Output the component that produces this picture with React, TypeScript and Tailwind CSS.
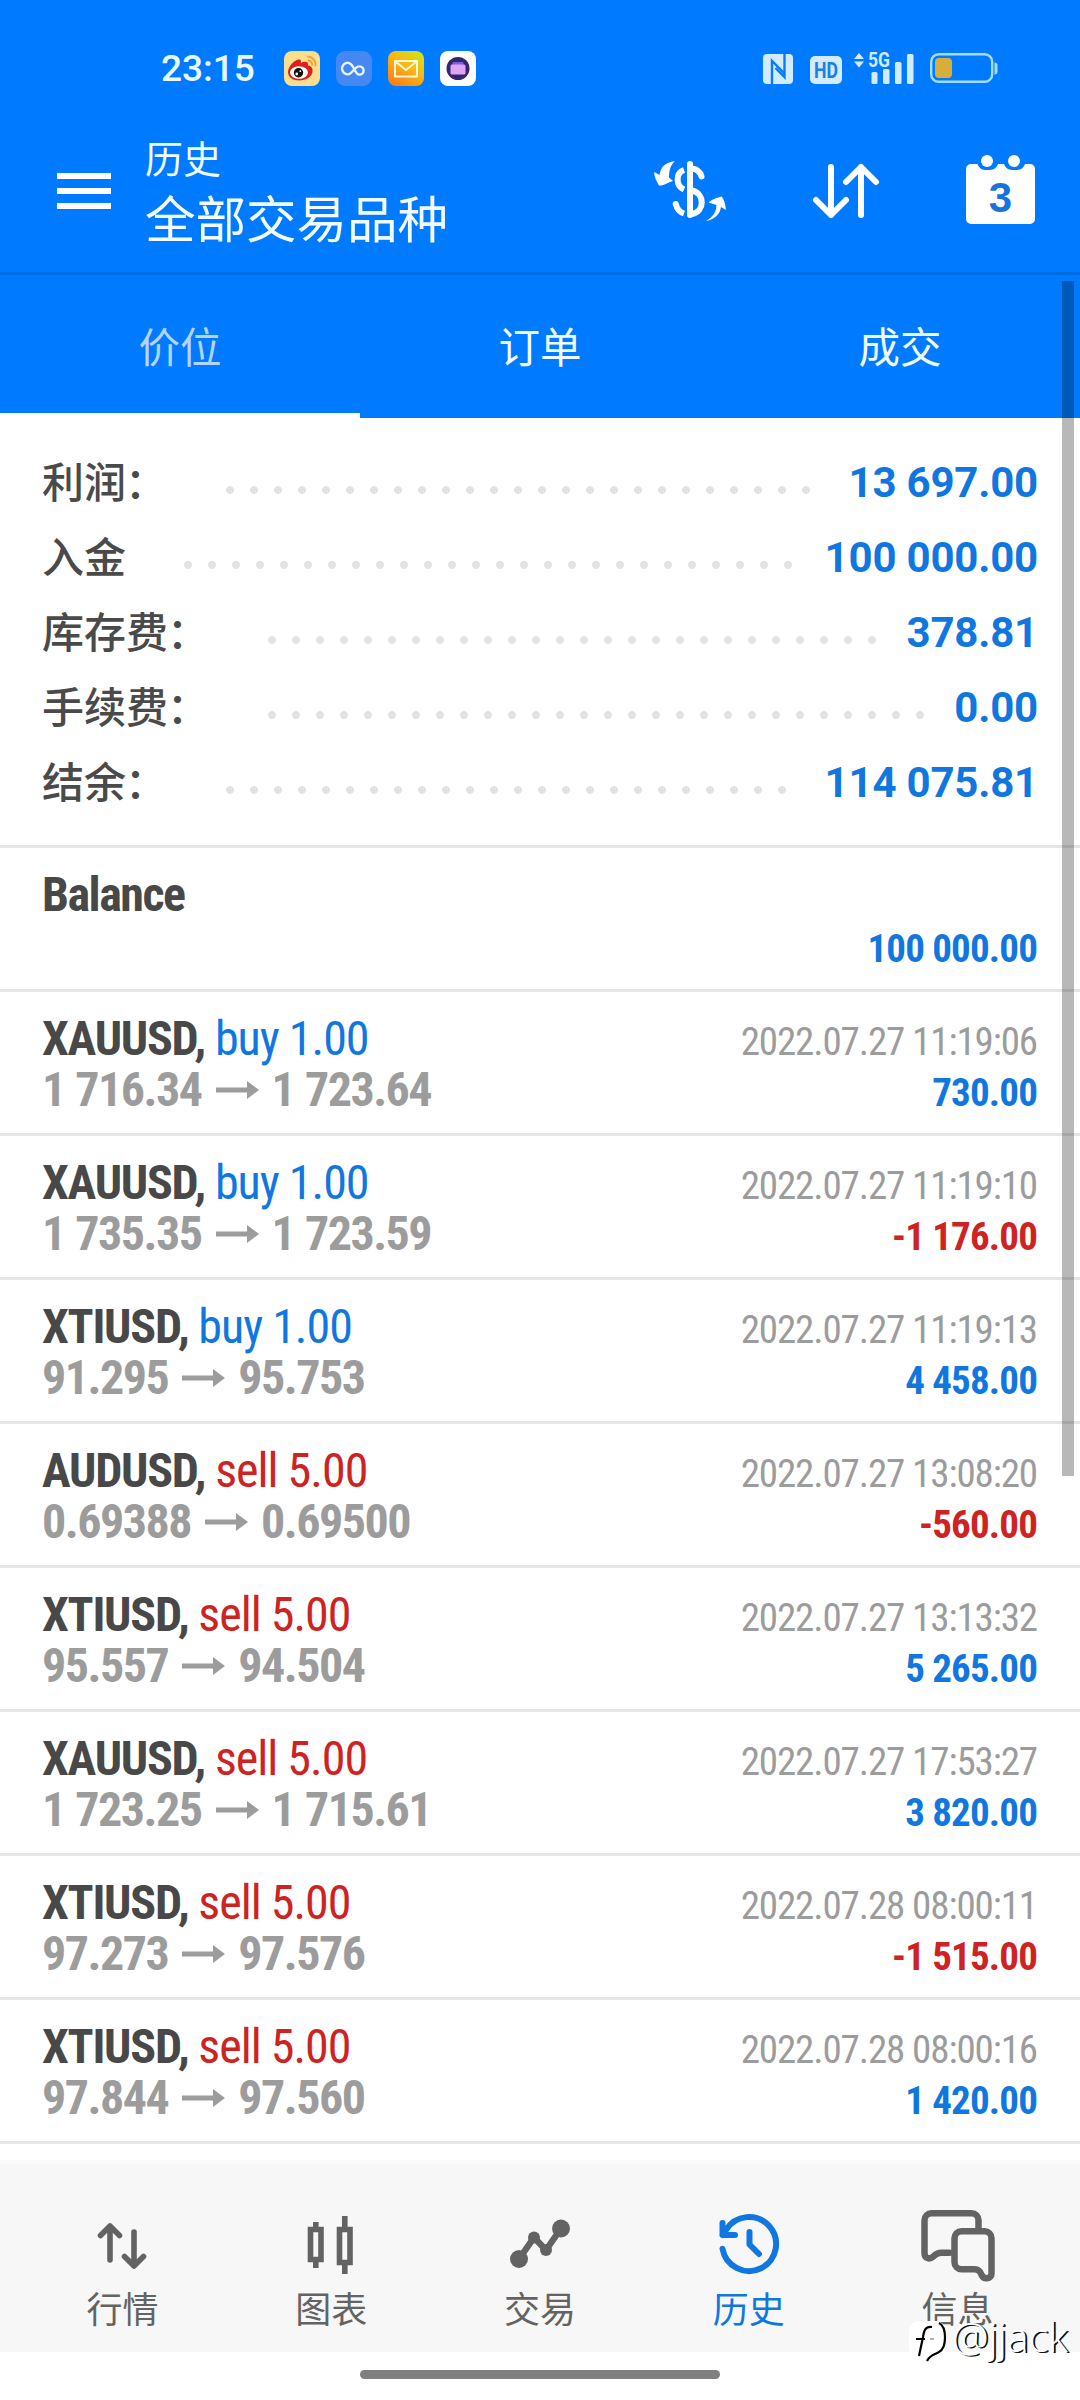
import React from "react";

const CN = "font-['Noto_Sans_CJK_SC',sans-serif]";

const summary = [
  { label: "利润", colon: true, dots: 25, value: "13 697.00" },
  { label: "入金", colon: false, dots: 26, value: "100 000.00" },
  { label: "库存费", colon: true, dots: 26, value: "378.81" },
  { label: "手续费", colon: true, dots: 28, value: "0.00" },
  { label: "结余", colon: true, dots: 24, value: "114 075.81" },
];

const deals = [
  ["XAUUSD", "buy 1.00", "1 716.34", "1 723.64", "2022.07.27 11:19:06", "730.00"],
  ["XAUUSD", "buy 1.00", "1 735.35", "1 723.59", "2022.07.27 11:19:10", "-1 176.00"],
  ["XTIUSD", "buy 1.00", "91.295", "95.753", "2022.07.27 11:19:13", "4 458.00"],
  ["AUDUSD", "sell 5.00", "0.69388", "0.69500", "2022.07.27 13:08:20", "-560.00"],
  ["XTIUSD", "sell 5.00", "95.557", "94.504", "2022.07.27 13:13:32", "5 265.00"],
  ["XAUUSD", "sell 5.00", "1 723.25", "1 715.61", "2022.07.27 17:53:27", "3 820.00"],
  ["XTIUSD", "sell 5.00", "97.273", "97.576", "2022.07.28 08:00:11", "-1 515.00"],
  ["XTIUSD", "sell 5.00", "97.844", "97.560", "2022.07.28 08:00:16", "1 420.00"],
];

function StatusBar() {
  return (
    <div className="flex h-[138px] pt-[51px] pl-[161px]">
      <div className="flex h-9 w-[123px] items-center font-['Roboto'] text-[37px] leading-9 font-medium text-[#e9f7ff]">23:15</div>
      <div className="flex gap-4">
        <svg width="36" height="36" viewBox="0 0 36 36">
          <rect width="36" height="35" rx="8" fill="#fbdf8c" />
          <path d="M24 5.500a8 8 0 0 1 7.500 9M24.500 9.500a4 4 0 0 1 3.600 4.400" fill="none" stroke="#f0a030" strokeWidth="1.800" strokeLinecap="round" />
          <path d="M4 21c0-5 6-12 10.500-12.500 3-.2 2.500 2 2.300 3.500 3-1.500 8-2.500 7.200 2.500 4 .8 4.800 3 4.500 6C28 26 22 29.500 15.500 29.500S4 26 4 21z" fill="#e01f1c" />
          <ellipse cx="15" cy="21.500" rx="9" ry="6.300" fill="#fff" />
          <circle cx="14.500" cy="21.800" r="4.700" fill="#111" />
          <circle cx="12.800" cy="23" r="1.400" fill="#fff" />
          <circle cx="16.300" cy="20.200" r=".9" fill="#fff" />
        </svg>
        <svg width="36" height="36" viewBox="0 0 36 36">
          <rect width="36" height="35" rx="9" fill="#4688f2" />
          <path d="M18 17.500c-2-3.500-3.500-5.700-6.200-5.700a5.600 5.600 0 0 0 0 11.600c4.800 0 6.200-8 11.700-8a4 4 0 0 1 0 8.200c-2.300 0-3.800-2-5.500-6.100z" fill="none" stroke="#e8f4ff" strokeWidth="2.400" />
        </svg>
        <svg width="36" height="36" viewBox="0 0 36 36">
          <defs>
            <linearGradient id="mail" x1="0.200" y1="1" x2="0.900" y2="0">
              <stop offset="0" stopColor="#fb7d1b" />
              <stop offset="0.550" stopColor="#fbb80f" />
              <stop offset="1" stopColor="#c9e818" />
            </linearGradient>
          </defs>
          <rect width="36" height="35" rx="8" fill="url(#mail)" />
          <path d="M7 10h22v15.500H7zM7.500 10.500 18 19l10.500-8.500" fill="none" stroke="#fff8e0" strokeWidth="2" strokeLinejoin="round" />
        </svg>
        <svg width="36" height="36" viewBox="0 0 36 36">
          <rect width="36" height="35" rx="8" fill="#fdfcff" />
          <circle cx="18" cy="17.500" r="11.500" fill="#33266f" />
          <rect x="12.500" y="11" width="11" height="4" rx="1" fill="#7d5fd0" />
          <rect x="10.500" y="13.500" width="15" height="10" rx="1.500" fill="#dfa5f2" />
        </svg>
      </div>
      <svg className="-mt-[9px] ml-[287px]" width="240" height="46" viewBox="0 -10 240 46" fill="#d3ebff">
        <rect x="0" y="2" width="30" height="30" rx="4" />
        <path d="M9 32V9l12.500 12.500M21.500 2v23L12.500 16" fill="none" stroke="#0a7df5" strokeWidth="2.400" />
        <rect x="47" y="4" width="32" height="28" rx="5" />
        <text x="63" y="25.500" textAnchor="middle" fontFamily="Roboto" fontSize="22" fontWeight="700" fill="#1b7fe6" textLength="24" lengthAdjust="spacingAndGlyphs">HD</text>
        <path d="M91 7l5-6 5 6zM91 9.500h10l-5 6z" />
        <text x="105" y="15" fontFamily="Roboto" fontSize="21" fontWeight="700" textLength="22" lengthAdjust="spacingAndGlyphs">5G</text>
        <rect x="108.500" y="20" width="6" height="12" rx="1.500" />
        <rect x="120" y="17" width="6.500" height="15" rx="1.500" />
        <rect x="132" y="10" width="6.500" height="22" rx="1.500" />
        <rect x="144" y="2" width="6.500" height="30" rx="1.500" />
        <rect x="168.200" y="2.200" width="61" height="27.600" rx="7.500" fill="none" stroke="#a5dcff" strokeWidth="2.400" />
        <path d="M231.500 10.500q3 0 3 3v6q0 3-3 3z" fill="#a5dcff" />
        <rect x="172" y="6" width="17" height="20" rx="4" fill="#d6ae39" />
      </svg>
    </div>
  );
}

function Header() {
  return (
    <div className="flex h-[134px] items-start text-white">
      <div className="mt-[35px] ml-[57px] flex w-[54px] flex-col gap-[9px]">
        <div className="h-1.5 bg-white" />
        <div className="h-1.5 bg-white" />
        <div className="h-1.5 bg-white" />
      </div>
      <div className={`${CN} -mt-[2px] ml-[34px] w-[508px] font-normal text-[#f2fbff]`}>
        <div className="h-[49px] text-[38px] leading-[42px]">历史</div>
        <div className="text-[50.500px] leading-[62px]">全部交易品种</div>
      </div>
      <svg className="mt-[17px]" width="384" height="74" viewBox="0 0 384 74" fill="none" stroke="#fff" strokeLinecap="round" strokeLinejoin="round">
        <path d="M37 9v51" strokeWidth="6" />
        <path d="M31 15c-8.500 3-8.500 15.500 0 19.500M31 58.500c-4.500-1.500-7-4-8-9" strokeWidth="6" strokeLinecap="butt" />
        <circle cx="22.700" cy="49" r="3" fill="#fff" stroke="none" />
        <path d="M39 13.500c5 .5 8 3 9.500 8M39 35.500c13 3 13 21 0 23.500" strokeWidth="6" />
        <path d="M22 6C11 8 8 12 6.500 20L1.500 17c-1 4 2 9 4.500 13.500C11 31 16 27 20 26l-4-3.500C16 14 18 10 22 6zM53 66c8-5 10-9 10.500-16l-8-2.500c3-3 9-5 13-6 3 3 4 9 4.500 13.500l-5-3C67 60 60 65 53 66z" fill="#fff" stroke="none" />
        <path d="M178 12v48M163 45l15 15 15-15M208 60V12M193 27l15-15 15 15" strokeWidth="6" />
        <path fillRule="evenodd" d="M318 9h6.500c1 3 4 6 7.500 6h5c4 0 7-3 8-6h6c1 3 4 6 8 6h5c4 0 7-3 8-6h5a5 5 0 0 1 5 5v50a5 5 0 0 1-5 5h-59a5 5 0 0 1-5-5V14a5 5 0 0 1 5-5z" fill="#fff" stroke="none" />
        <circle cx="334" cy="6" r="6" fill="#fff" stroke="none" />
        <circle cx="361" cy="6" r="6" fill="#fff" stroke="none" />
        <text x="347.500" y="56.500" textAnchor="middle" fontFamily="Liberation Sans" fontSize="42" fontWeight="700" fill="#1675dc" stroke="none">3</text>
      </svg>
    </div>
  );
}

function Tabs() {
  return (
    <div className={`${CN} grid h-[146px] grid-cols-3 border-t-[3px] border-[#006ce4] text-center text-[41.500px] leading-[141px] font-normal text-[#f0faff]`}>
      <div className="h-[143px] border-b-[5px] border-white text-[#b5d4fa]">价位</div>
      <div>订单</div>
      <div>成交</div>
    </div>
  );
}

function Dots({ count }: { count: number }) {
  return (
    <div
      className="h-2 bg-[radial-gradient(circle,#e2e2e2_3.600px,transparent_4.200px)] bg-[length:24px_8px]"
      style={{ width: count * 24 }}
    />
  );
}

function Summary() {
  return (
    <div className="flex h-[427px] flex-col pt-[27px] pr-[42px] pl-[42px]">
      {summary.map((s) => (
        <div key={s.label} className="flex h-[75px] items-center">
          <div className={`${CN} -mt-[6px] flex text-[42px] font-medium text-[#4a4a4a]`}>
            {s.label}
            {s.colon && <span className="-ml-px w-[43px]">：</span>}
          </div>
          <div className="mt-[15px] ml-[50px]"><Dots count={s.dots} /></div>
          <div className="ml-auto font-['Roboto'] text-[42px] font-bold tracking-[-0.200px] text-[#1177e0]">{s.value}</div>
        </div>
      ))}
    </div>
  );
}

const RC = "font-['Roboto_Condensed','Roboto'] [font-stretch:75%]";

function Deal({ d }: { d: string[] }) {
  const [symbol, side, from, to, time, profit] = d;
  return (
    <div className={`${RC} flex h-36 justify-between border-t-[3px] border-[#e6e6e6] pt-[21px] pr-[43px] pl-[42px]`}>
      <div className="text-[48px] leading-[51px] tracking-[-1.250px] whitespace-pre">
        <div>
          <span className="font-bold text-[#484848]">{symbol}, </span>
          <span className={side.startsWith("buy") ? "tracking-[-1px] text-[#1177e0]" : "tracking-[-1px] text-[#cd2323]"}>{side}</span>
        </div>
        <div className="flex items-center font-bold tracking-[-1.500px] [word-spacing:1px] text-[#9c9c9c]">
          {from}
          <svg className="mr-[13px] ml-[14px]" width="43" height="20" viewBox="0 0 43 20" fill="#9c9c9c">
            <path d="M0 7.500h31V1l12 9-12 9v-6.500H0z" />
          </svg>
          {to}
        </div>
      </div>
      <div className="pt-[4px] text-right text-[39px] leading-[51px]">
        <div className="tracking-[-1.100px] text-[#9c9c9c]">{time}</div>
        <div className={profit.startsWith("-") ? "font-bold tracking-[-0.850px] text-[#cd2323]" : "font-bold tracking-[-0.850px] text-[#1177e0]"}>{profit}</div>
      </div>
    </div>
  );
}

function NavIcon({ name }: { name: string }) {
  return (
    <svg width="84" height="76" viewBox="0 0 84 76" fill="none" stroke="currentColor" strokeLinecap="round" strokeLinejoin="round">
      {name === "quotes" && <path d="M30 54V20M20.500 29.500 30 20l9.500 9.500M54 26v34M44.500 50.500 54 60l9.500-9.500" strokeWidth="5.600" />}
      {name === "chart" && <path d="M21.500 23.500H32V53.500H21.500zM50.500 23.500H61V56.500H50.500zM26.800 16v7M26.800 54v8M55.800 10v13M55.800 57v11" strokeWidth="5.600" strokeLinecap="butt" strokeLinejoin="miter" />}
      {name === "trade" && (
        <g fill="currentColor" stroke="none">
          <path d="M21 53 36 31.500 48 44 63 22.500" fill="none" stroke="currentColor" strokeWidth="6.500" />
          <circle cx="21" cy="53" r="9" />
          <circle cx="36" cy="31.500" r="6" />
          <circle cx="48" cy="44" r="6" />
          <circle cx="63" cy="22.500" r="9" />
        </g>
      )}
      {name === "history" && <path d="M15.500 42.700A27 27 0 1 0 19 24L15.500 29M15.500 17v12H28M42.500 26v12.500l9.500 9.500" strokeWidth="6" />}
      {name === "chat" && <path d="M63 22V14a7 7 0 0 0-7-7H16a7 7 0 0 0-7 7v32.500c0 6 5 7 8.500 4 3-3 5-4 8-4H34M46 25h23a7 7 0 0 1 7 7v35.500c0 5.500-8 6-10 1-1-3-3-5.500-7-5.500H46a7 7 0 0 1-7-7V32a7 7 0 0 1 7-7z" strokeWidth="6.500" transform="translate(-.5 .2)" />}
    </svg>
  );
}

function BottomNav() {
  const items = [["quotes", "行情"], ["chart", "图表"], ["trade", "交易"], ["history", "历史"], ["chat", "信息"]];
  return (
    <div className="grid h-[192px] grid-cols-5 border-t-4 border-[#fafafa] bg-[#f7f7f7] px-[18px]">
      {items.map(([icon, label]) => (
        <div key={icon} className={`flex flex-col items-center pt-[42px] ${icon === "history" ? "text-[#1177e0]" : "text-[#636363]"}`}>
          <NavIcon name={icon} />
          <div className={`${CN} mt-px text-[36px] leading-[48px] font-normal`}>{label}</div>
        </div>
      ))}
    </div>
  );
}

export default function App() {
  return (
    <div className="relative h-[2400px] w-[1080px] overflow-hidden bg-white">
      <div className="bg-[#007aff]">
        <StatusBar />
        <Header />
        <Tabs />
      </div>
      <Summary />
      <div className={`${RC} flex h-36 justify-between border-t-[3px] border-[#e6e6e6] pt-[21px] pr-[43px] pl-[42px] font-bold`}>
        <div className="text-[48px] leading-[51px] tracking-[-1.500px] text-[#484848]">Balance</div>
        <div className="pt-[55px] text-[39px] leading-[51px] tracking-[-0.850px] text-[#1177e0]">100 000.00</div>
      </div>
      {deals.map((d, i) => <Deal key={i} d={d} />)}
      <div className="h-[19px] border-t-[3px] border-[#e6e6e6]" />
      <BottomNav />
      <div className="mx-auto mt-[18px] h-[9px] w-[360px] rounded-full bg-[#808080]" />
      <div className="absolute top-[281px] right-[6px] h-[1195px] w-3 bg-black/28" />
      <div className="absolute top-[2313px] left-[908px] flex items-start">
        <svg width="40" height="52" viewBox="0 0 40 52" fill="none">
          <rect x="1" y="8" width="37" height="36" rx="10" fill="#fff" />
          <path d="M31 10c8 4 8 25 0 29-5 3-9 3-12 9" stroke="#000" strokeWidth="2.200" />
          <path d="M24 14c-7-1-8 4-9 10L11 43M8 26h9" stroke="#000" strokeWidth="2.200" />
          <path d="M22 26h4" stroke="#999" strokeWidth="1.500" />
        </svg>
        <div className="ml-1 font-['Open_Sans'] text-[41px] leading-[46px] font-light text-white [text-shadow:2px_1px_0_#111]">@jjack</div>
      </div>
    </div>
  );
}
